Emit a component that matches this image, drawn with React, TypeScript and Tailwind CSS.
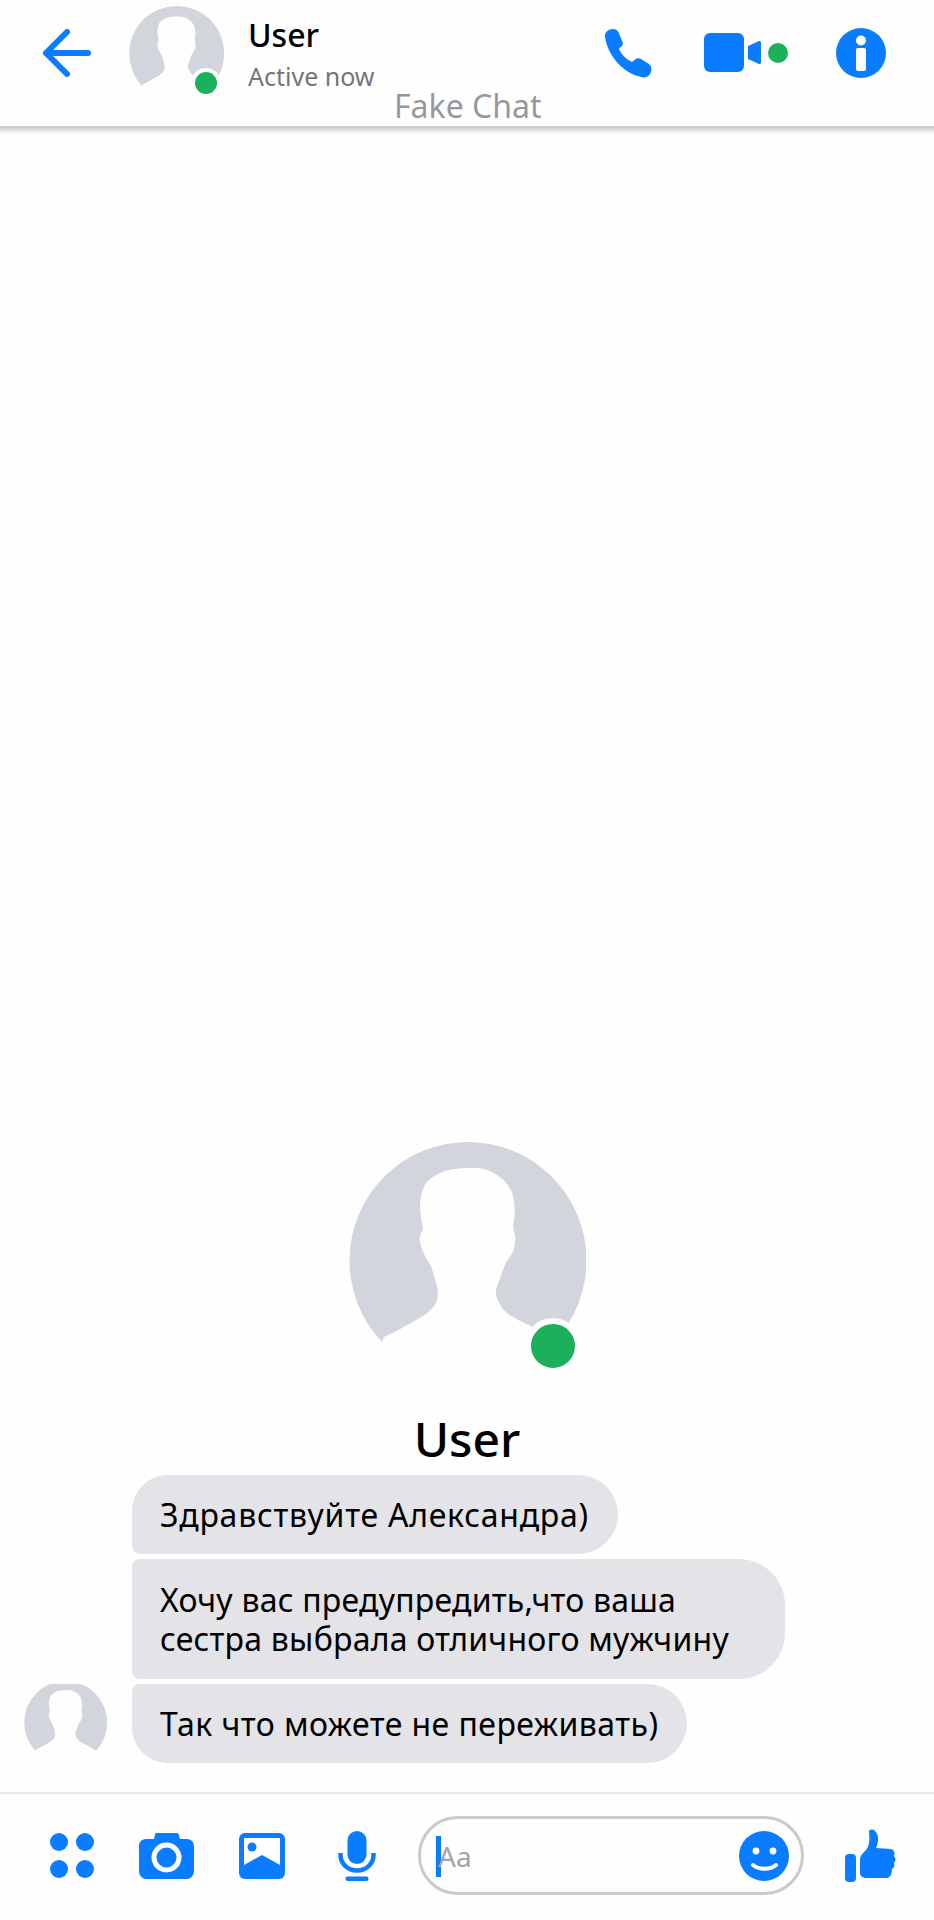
import { ReactNode } from "react";

const BLUE = "#0a7cff";

function Avatar({ className }: { className: string }) {
  return (
    <svg viewBox="0 0 237 237" className={className}>
      <path
        fill="#d3d5dc"
        d="M33 200A118.5 118.5 0 1 1 205 200L182 184C168 178 156 172 152 164C148 158 146 152 147 147L157 120C162 114 166 108 166 100C167 94 165 90 164 84C166 76 166 68 165 60C164 50 160 42 152 36C146 31 139 27 128 26L115 26C104 27 96 28 89 32C82 36 76 40 75 45C72 52 71 58 71 64C71 72 73 80 74 87C71 92 70 96 71 100C73 110 78 118 82 124C85 134 88 142 89 150C89 156 88 160 85 164C80 170 75 174 69 177C58 183 46 190 35 195Z"
      />
    </svg>
  );
}

function Bubble({ children, className }: { children: ReactNode; className: string }) {
  return (
    <div className={`flex items-center bg-[#e4e4e8] pl-7 text-[32px] leading-[39px] text-black ${className}`}>
      {children}
    </div>
  );
}

function Header() {
  return (
    <header className="relative flex h-[126px] shrink-0 items-center bg-[#fefefe] pb-[20px]">
      <svg viewBox="0 0 48 48" className="ml-[43px] h-[48px] w-[48px]" fill="none" stroke={BLUE} strokeWidth="6" strokeLinecap="round" strokeLinejoin="round">
        <path d="M45 24H3M24 3L3 24L24 45" />
      </svg>
      <div className="relative ml-[38px] h-[95px] w-[95px]">
        <Avatar className="h-[95px] w-[95px]" />
        <span className="absolute left-[62px] top-[62px] h-[30px] w-[30px] rounded-full border-[4px] border-[#fefefe] bg-[#1bb059]" />
      </div>
      <div className="ml-[24px] flex flex-col">
        <span className="text-[32px] leading-[38px] font-medium text-black">User</span>
        <span className="mt-[7px] text-[25px] leading-[30px] text-[#75757a]">Active now</span>
      </div>
      <span className="absolute left-[394px] top-[88px] text-[32px] leading-[36px] text-[#98989c]">Fake Chat</span>

      <div className="ml-auto flex items-center">
        <svg viewBox="0 0 49 49" className="h-[49px] w-[49px]" fill={BLUE}>
          <path d="M1 8C0 3 5 0 9 0C13 0 15 3 16 7L19 14C19 17 16 18 15 20C17 25 22 30 28 33C31 31 33 28 37 30L45 35C48 37 48 42 46 45C44 48 41 49 37 48C19 44 4 27 1 8Z" />
        </svg>
        <svg viewBox="0 0 57 40" className="ml-[51px] h-[40px] w-[57px]" fill={BLUE}>
          <rect x="0" y="0" width="40" height="39" rx="6" />
          <path d="M44 13L55 8C56 8 57 8 57 10V29C57 31 56 31 55 31L44 26Z" />
        </svg>
        <span className="ml-[7px] h-[20px] w-[20px] rounded-full bg-[#1bb059]" />
        <svg viewBox="0 0 50 50" className="ml-[48px] mr-[48px] h-[50px] w-[50px]">
          <circle cx="25" cy="25" r="25" fill={BLUE} />
          <circle cx="25" cy="12.5" r="5" fill="#fff" />
          <rect x="20" y="20" width="10" height="23" rx="2" fill="#fff" />
        </svg>
      </div>
      <div className="absolute left-0 right-0 top-[126px] h-[8px] bg-gradient-to-b from-[#c4c4c6] to-[#fefefe]" />
    </header>
  );
}

function Conversation() {
  return (
    <main className="flex min-h-0 flex-1 flex-col justify-end pb-[29px]">
      <div className="flex flex-col items-center">
        <div className="relative h-[237px] w-[237px]">
          <Avatar className="h-[237px] w-[237px]" />
          <span className="absolute left-[176px] top-[176px] h-[56px] w-[56px] rounded-full border-[6px] border-[#fefefe] bg-[#1bb059]" />
        </div>
        <div className="mt-[32px] text-[48px] leading-[56px] font-medium text-black">User</div>
      </div>
      <div className="mt-[8px] flex flex-col gap-[5px]">
        <div className="ml-[132px]">
          <Bubble className="h-[79px] w-[486px] rounded-tl-[36px] rounded-bl-[8px] rounded-r-[40px] tracking-[0.75px]">Здравствуйте Александра)</Bubble>
        </div>
        <div className="ml-[132px]">
          <Bubble className="h-[120px] w-[653px] rounded-l-[8px] rounded-r-[46px] tracking-[0.22px]">
            <div>
              Хочу вас предупредить,что ваша
              <br />
              сестра выбрала отличного мужчину
            </div>
          </Bubble>
        </div>
        <div className="flex">
          <div className="ml-[24px] mr-[25px] h-[66px] w-[83px] overflow-hidden">
            <Avatar className="-mt-[3px] h-[83px] w-[83px]" />
          </div>
          <Bubble className="h-[79px] w-[555px] rounded-tl-[8px] rounded-bl-[36px] rounded-r-[40px] tracking-[0.45px]">Так что можете не переживать)</Bubble>
        </div>
      </div>
    </main>
  );
}

function Composer() {
  return (
    <footer className="flex h-[128px] shrink-0 items-center border-t-[2px] border-[#e6e6ea] pb-[3px]">
      <svg viewBox="0 0 44 46" className="ml-[50px] h-[46px] w-[44px]" fill={BLUE}>
        <circle cx="9" cy="9" r="9" />
        <circle cx="35" cy="9" r="9" />
        <circle cx="9" cy="36" r="9" />
        <circle cx="35" cy="36" r="9" />
      </svg>
      <svg viewBox="0 0 55 46" className="ml-[45px] h-[46px] w-[55px]" fill={BLUE}>
        <path d="M17 0H38C39 0 40 1 40 2L41 6H48C52 6 55 9 55 13V38C55 42 52 46 48 46H7C3 46 0 42 0 38V13C0 9 3 6 7 6H15L16 2C16 1 16 0 17 0Z" />
        <circle cx="27.5" cy="24.5" r="15" fill="#fff" />
        <circle cx="27.5" cy="24.5" r="10" fill={BLUE} />
      </svg>
      <svg viewBox="0 0 46 46" className="ml-[45px] h-[46px] w-[46px]">
        <rect width="46" height="46" rx="6" fill={BLUE} />
        <path d="M5 5H41V32L23 22L5 32Z" fill="#fff" />
        <circle cx="13" cy="14" r="4.5" fill={BLUE} />
      </svg>
      <svg viewBox="0 0 38 50" className="ml-[53px] h-[50px] w-[38px]" fill="none">
        <rect x="9.5" y="0" width="19" height="33" rx="9.5" fill={BLUE} />
        <path d="M2.5 22V24C2.5 33 10 39.5 19 39.5C28 39.5 35.5 33 35.5 24V22" stroke={BLUE} strokeWidth="4.5" />
        <rect x="7.5" y="45.5" width="23" height="4.5" rx="2" fill={BLUE} />
      </svg>
      <div className="relative ml-[42px] flex h-[79px] w-[386px] items-center justify-end rounded-full border-[3px] border-[#cacacd] pr-[12px]">
        <span className="absolute left-[15px] top-[17px] h-[41px] w-[5px] bg-[#0a7cff]" />
        <span className="absolute left-[17px] top-[21px] text-[28px] leading-[32px] text-[#a3a3a6]">Aa</span>
        <svg viewBox="0 0 50 50" className="h-[50px] w-[50px]">
          <circle cx="25" cy="25" r="25" fill={BLUE} />
          <circle cx="17" cy="20" r="3.4" fill="#fff" />
          <circle cx="34" cy="20" r="3.4" fill="#fff" />
          <path d="M14 34C20 39 31 39 37 34" fill="none" stroke="#fff" strokeWidth="4" strokeLinecap="round" />
        </svg>
      </div>
      <svg viewBox="0 0 51 53" className="ml-[41px] h-[53px] w-[51px]" fill={BLUE}>
        <rect x="0" y="25" width="11" height="28" rx="4" />
        <path d="M15 30C15 27 18 24 21 21C24 17 25 12 24 3C24 0 28 0 30 2C34 6 34 13 31 19L46 20C50 21 50 25 49 27C51 29 51 32 49 34C50 36 49 39 47 40C47 45 45 49 42 49L22 49C18 49 15 47 15 44Z" />
      </svg>
    </footer>
  );
}

export default function App() {
  return (
    <div className="flex h-[1920px] w-[934px] flex-col overflow-hidden bg-[#fefefe] font-['Noto_Sans',sans-serif]">
      <Header />
      <Conversation />
      <Composer />
    </div>
  );
}
